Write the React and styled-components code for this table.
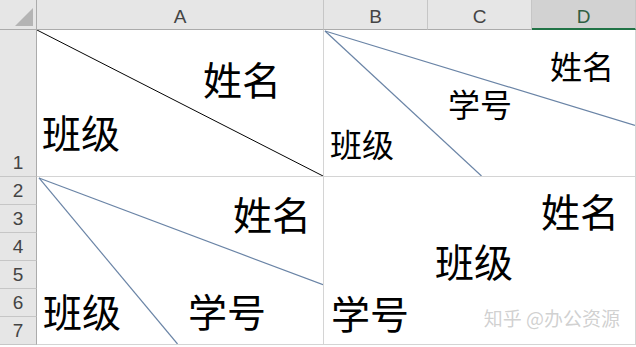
import React from "react";
import styled, { createGlobalStyle } from "styled-components";

const GlobalStyle = createGlobalStyle`
  html, body {
    margin: 0;
    padding: 0;
    background: #ffffff;
  }
  body {
    font-family: "Noto Sans", "Liberation Sans", sans-serif;
  }
`;

const Sheet = styled.div`
  display: grid;
  grid-template-columns: 37px 287px 104px 104px 104px;
  grid-template-rows: 30px 147px repeat(6, 28px);
  width: 636px;
  height: 347px;
  overflow: hidden;
  background: #ffffff;
`;

const Corner = styled.div`
  background: #e6e6e6;
  border-right: 1px solid #ababab;
  border-bottom: 1px solid #ababab;
  box-sizing: border-box;
  display: flex;
  align-items: flex-end;
  justify-content: flex-end;
  padding: 0 3px 3px 0;
`;

const CornerTriangle = styled.div`
  width: 0;
  height: 0;
  border-left: 18px solid transparent;
  border-bottom: 18px solid #b4b4b4;
`;

const ColHeader = styled.div`
  background: ${(p) => (p.active ? "#d2d2d2" : "#e6e6e6")};
  border-right: 1px solid #c6c6c6;
  border-bottom: ${(p) => (p.active ? "2px solid #217346" : "1px solid #ababab")};
  box-sizing: border-box;
  display: flex;
  align-items: center;
  justify-content: center;
  font-family: "Liberation Sans", "Noto Sans", sans-serif;
  font-size: 19px;
  color: ${(p) => (p.active ? "#2f5f42" : "#444444")};
  padding-top: 5px;
`;

const RowHeader = styled.div`
  grid-column: 1;
  background: #e6e6e6;
  border-right: 1px solid #ababab;
  border-bottom: 1px solid #c6c6c6;
  box-sizing: border-box;
  display: flex;
  justify-content: center;
  align-items: ${(p) => (p.bottom ? "flex-end" : "center")};
  padding-bottom: ${(p) => (p.bottom ? "2px" : "0")};
  font-family: "Liberation Sans", "Noto Sans", sans-serif;
  font-size: 19px;
  color: #444444;
`;

const Cell = styled.div`
  position: relative;
  grid-column: ${(p) => p.col};
  grid-row: ${(p) => p.row};
  border-right: 1px solid #d4d4d4;
  border-bottom: 1px solid #d4d4d4;
  box-sizing: border-box;
  display: flex;
  flex-direction: column;
  align-items: flex-start;
  overflow: hidden;
`;

const LabelRow = styled.div`
  display: flex;
  align-items: flex-start;
`;

const Label = styled.span`
  font-family: "Noto Sans CJK SC", "Noto Sans CJK JP", sans-serif;
  font-size: ${(p) => p.size}px;
  font-weight: 400;
  line-height: 1;
  color: #000000;
  margin-left: ${(p) => p.ml || 0}px;
  margin-top: ${(p) => p.mt || 0}px;
  white-space: nowrap;
  position: relative;
  z-index: 1;
`;

const Diagonal = styled.svg`
  position: absolute;
  inset: 0;
  width: 100%;
  height: 100%;
  pointer-events: none;
`;

const Watermark = styled.div`
  position: absolute;
  right: 15px;
  bottom: 13px;
  font-family: "Noto Sans CJK SC", "Noto Sans", sans-serif;
  font-size: 19px;
  color: rgba(170, 170, 170, 0.55);
  white-space: nowrap;
`;

export default function App() {
  return (
    <>
      <GlobalStyle />
      <Sheet>
        <Corner>
          <CornerTriangle />
        </Corner>
        <ColHeader>A</ColHeader>
        <ColHeader>B</ColHeader>
        <ColHeader>C</ColHeader>
        <ColHeader active>D</ColHeader>

        <RowHeader bottom style={{ gridRow: 2 }}>1</RowHeader>
        {[2, 3, 4, 5, 6, 7].map((n) => (
          <RowHeader key={n} style={{ gridRow: n + 1 }}>
            {n}
          </RowHeader>
        ))}

        {/* A1: one diagonal */}
        <Cell col="2" row="2">
          <Diagonal viewBox="0 0 287 147" preserveAspectRatio="none">
            <line x1="0" y1="0" x2="287" y2="147" stroke="#000" strokeWidth="1" />
          </Diagonal>
          <Label size={39} ml={166} mt={29}>姓名</Label>
          <Label size={39} ml={5} mt={14}>班级</Label>
        </Cell>

        {/* B1:D1: two diagonals */}
        <Cell col="3 / 6" row="2">
          <Diagonal viewBox="0 0 312 147" preserveAspectRatio="none">
            <line x1="1" y1="1" x2="312" y2="96" stroke="#6a84a6" strokeWidth="1.2" />
            <line x1="1" y1="1" x2="158" y2="147" stroke="#6a84a6" strokeWidth="1.2" />
          </Diagonal>
          <Label size={32} ml={226} mt={19}>姓名</Label>
          <Label size={32} ml={124} mt={6}>学号</Label>
          <Label size={32} ml={6} mt={8}>班级</Label>
        </Cell>

        {/* A2:A7 */}
        <Cell col="2" row="3 / 9">
          <Diagonal viewBox="0 0 287 169" preserveAspectRatio="none">
            <line x1="2" y1="1" x2="287" y2="109" stroke="#6a84a6" strokeWidth="1.2" />
            <line x1="2" y1="1" x2="141" y2="169" stroke="#6a84a6" strokeWidth="1.2" />
          </Diagonal>
          <Label size={39} ml={196} mt={17}>姓名</Label>
          <LabelRow>
            <Label size={39} ml={6} mt={58}>班级</Label>
            <Label size={39} ml={67} mt={58}>学号</Label>
          </LabelRow>
        </Cell>

        {/* B2:D7 */}
        <Cell col="3 / 6" row="3 / 9">
          <Label size={39} ml={217} mt={14}>姓名</Label>
          <Label size={39} ml={111} mt={11}>班级</Label>
          <Label size={39} ml={7} mt={13}>学号</Label>
          <Watermark>知乎 @办公资源</Watermark>
        </Cell>
      </Sheet>
    </>
  );
}
